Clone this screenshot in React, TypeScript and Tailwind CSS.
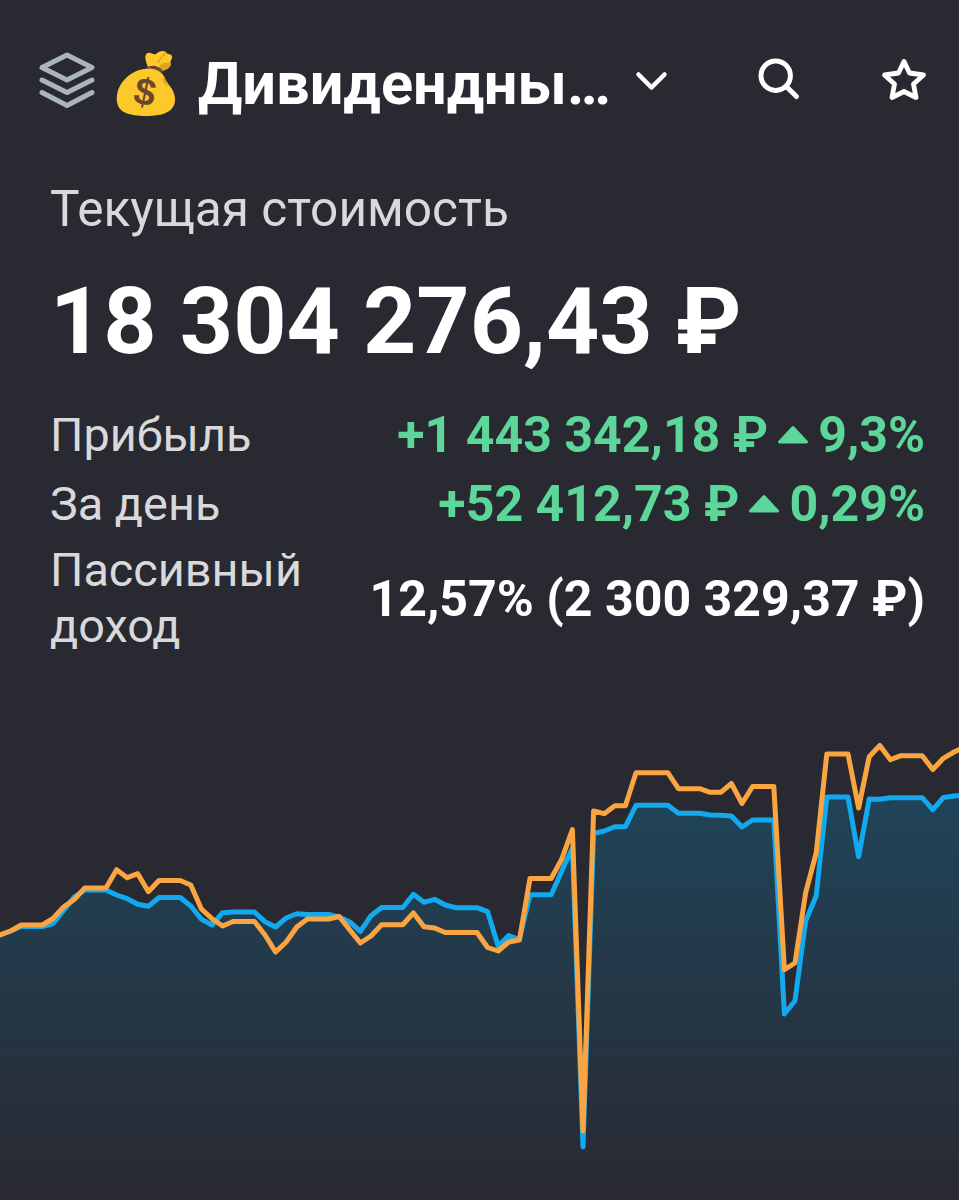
const STEP = 10.6;
const CHART_TOP = 700;
const CHART_HEIGHT = 500;

const invested = [
    935, 931, 926.5, 926.5, 926.5, 923.5, 910.5, 897, 890, 890, 890, 895, 898.7, 904.3, 906.3, 897.5,
    897.5, 897.5, 906, 919.3, 925, 912.7, 912, 912, 912, 921.7, 927, 918, 913.7, 914.5, 914.5, 914.5,
    917, 922, 931.3, 915.7, 907.5, 907.5, 907.5, 894.3, 902.3, 899.3, 905, 907.7, 907.7, 907.7, 911.7,
    946, 935.5, 939.5, 894.7, 894.7, 894.7, 871, 848, 1147, 833.5, 831, 826.7, 826.7, 805.3, 805.3,
    805.3, 805.3, 813.3, 813.3, 813.3, 815, 815.3, 816, 827, 820, 820, 820, 1014, 1000.7, 921, 896,
    797, 797, 797, 856.7, 799, 799.3, 797.7, 797.7, 797.7, 797.7, 809.7, 797.5, 796, 795,
];

const value = [
    935, 931, 925, 925, 925, 918.5, 907, 899.5, 888, 888, 888, 869.7, 877.7, 873.7, 891.7, 880.5,
    880.5, 880.5, 885, 909, 918.7, 926, 921.5, 921.5, 921.5, 935, 952, 942, 927, 919, 919, 919, 916.5,
    930, 943, 936, 924.7, 924.7, 924.7, 913, 926.7, 928, 932.5, 932.5, 932.5, 932.5, 947.5, 951, 942,
    940, 878.5, 878.5, 878.5, 859, 829.5, 1131, 811, 813.7, 805.7, 805.7, 772.7, 772.7, 772.7, 772.7,
    788.7, 788.7, 788.7, 792.3, 792.3, 783.5, 803.5, 786.5, 786.5, 786.5, 969.7, 963, 893, 853, 754,
    754, 754, 808, 756.7, 745.5, 759.7, 755.7, 755.7, 755.7, 769.5, 758.3, 752, 747,
];

const toPoints = (series: number[]) =>
    series.map((y, i) => `${(i * STEP).toFixed(1)},${(y - CHART_TOP).toFixed(1)}`).join(' ');

function LayersIcon() {
    return (
        <svg className="w-[62px] h-[62px] shrink-0" viewBox="0 0 62 62" fill="none" stroke="#a9b4bf" strokeWidth={5} strokeLinecap="round" strokeLinejoin="round">
            <path d="M31 6 56 18.5 31 31 6 18.5Z" />
            <path d="M6 31 31 43.5 56 31" />
            <path d="M6 43.5 31 56.5 56 43.5" />
        </svg>
    );
}

function MoneyBag() {
    return (
        <svg className="w-[64px] h-[70px] shrink-0" viewBox="0 0 64 70">
            <path d="M34 18C31 11 30 5 34 4C37 3 39 6 42 5C45 2 49 1 52 3C53 6 56 4 58 7C59 10 55 12 57 15C56 19 52 21 48 22Z" fill="#fdc829" />
            <path d="M44 19C47 14 51 13 57 14C57 18 52 21 48 22Z" fill="#e0a11b" />
            <path d="M44 14C46 9 49 6 52 3" fill="none" stroke="#e0a11b" strokeWidth={1.2} />
            <path d="M32 19C38 15 45 17 49 22L47 26L31 21Z" fill="#6d4632" />
            <path d="M31 20C39 18 48 22 51 29C52 34 60 39 61 49C62 59 54 65 44 66C34 68 19 67 12 64C4 61 2 54 3 46C5 32 18 21 31 20Z" fill="#fdc829" />
            <path d="M50 27C48 31 50 35 54 38C52 34 52 31 50 27Z" fill="#e0a11b" />
            <text x="31" y="56" textAnchor="middle" fontSize="38" transform="rotate(12 31 43)" className="font-['Liberation_Sans',sans-serif] font-bold" fill="#6d4632">
                $
            </text>
        </svg>
    );
}

function Up() {
    return (
        <svg className="-mt-[3px] w-[30px] h-[20px] shrink-0" viewBox="0 0 30 20">
            <path d="M15 2.5 28.5 17H1.5Z" fill="currentColor" stroke="currentColor" strokeWidth={3} strokeLinejoin="round" />
        </svg>
    );
}

export default function App() {
    return (
        <div className="w-[959px] h-[1200px] overflow-hidden flex flex-col bg-[#292931] text-white font-['Roboto',sans-serif]">
            {/* Header */}
            <header className="h-[160px] shrink-0 flex items-center pl-9">
                <LayersIcon />
                <div className="ml-4 mt-2">
                    <MoneyBag />
                </div>
                <h1 className="ml-[20px] mt-2 w-[412px] text-[59.5px] leading-[70px] font-bold whitespace-nowrap">Дивидендны…</h1>
                <svg className="ml-[24px] w-[34px] h-[24px] shrink-0" viewBox="0 0 34 24" fill="none" stroke="currentColor" strokeWidth={4.5} strokeLinecap="round" strokeLinejoin="round">
                    <path d="M4.5 6.5 17.5 19.5 30.5 6.5" />
                </svg>
                <svg className="ml-[87px] w-[46px] h-[46px] shrink-0" viewBox="0 0 46 46" fill="none" stroke="currentColor" strokeWidth={5} strokeLinecap="round">
                    <circle cx="20.7" cy="18.7" r="14.7" />
                    <path d="M31.5 29.7 41.5 39.5" />
                </svg>
                <svg className="ml-[79px] -mt-[2px] w-[48px] h-[48px] shrink-0" viewBox="0 0 48 48" fill="none" stroke="currentColor" strokeWidth={4.8} strokeLinejoin="round">
                    <path d="M24 6.5 29.5 18 43.5 20 33.5 29 36 42.5 24 36.5 12 42.5 14.5 29 4.5 20 18.5 18Z" />
                </svg>
            </header>

            {/* Summary */}
            <section className="h-[540px] shrink-0 pl-[50px] pr-[34px]">
                <p className="pt-5 text-[49.6px] leading-[58px] text-[#d9d9db] whitespace-nowrap">Текущая стоимость</p>
                <p className="mt-[29px] text-[93px] leading-[110px] font-bold whitespace-nowrap">18 304 276,43 ₽</p>
                <dl className="mt-[23px] text-[50.1px] font-bold">
                    <div className="h-[69px] flex items-center justify-between">
                        <dt className="pt-px text-[46.8px] font-normal text-[#d9d9db]">Прибыль</dt>
                        <dd className="mt-[3px] flex items-center gap-[10px] whitespace-nowrap text-[#5cd699]">
                            +1 443 342,18 ₽ <Up /> 9,3%
                        </dd>
                    </div>
                    <div className="h-[69px] flex items-center justify-between">
                        <dt className="pt-px text-[46.8px] font-normal text-[#d9d9db]">За день</dt>
                        <dd className="mt-[3px] flex items-center gap-[10px] whitespace-nowrap text-[#5cd699]">
                            +52 412,73 ₽ <Up /> 0,29%
                        </dd>
                    </div>
                    <div className="h-[120px] flex items-center justify-between">
                        <dt className="w-[270px] text-[46.8px] leading-[56px] font-normal text-[#d9d9db]">Пассивный доход</dt>
                        <dd className="mt-[3px] whitespace-nowrap">12,57% (2 300 329,37 ₽)</dd>
                    </div>
                </dl>
            </section>

            {/* Chart */}
            <svg className="w-[959px] h-[500px] shrink-0" viewBox={`0 0 959 ${CHART_HEIGHT}`} fill="none" strokeWidth={5} strokeLinejoin="round" strokeLinecap="round">
                <defs>
                    <linearGradient id="area" gradientUnits="userSpaceOnUse" x1="0" y1="95" x2="0" y2={CHART_HEIGHT}>
                        <stop offset="0" stopColor="#20445a" />
                        <stop offset="1" stopColor="#292931" />
                    </linearGradient>
                </defs>
                <polygon points={`0,${CHART_HEIGHT} ${toPoints(invested)} 970,${CHART_HEIGHT}`} fill="url(#area)" />
                <polyline points={toPoints(invested)} stroke="#12a9ee" />
                <polyline points={toPoints(value)} stroke="#faa541" />
            </svg>
        </div>
    );
}
